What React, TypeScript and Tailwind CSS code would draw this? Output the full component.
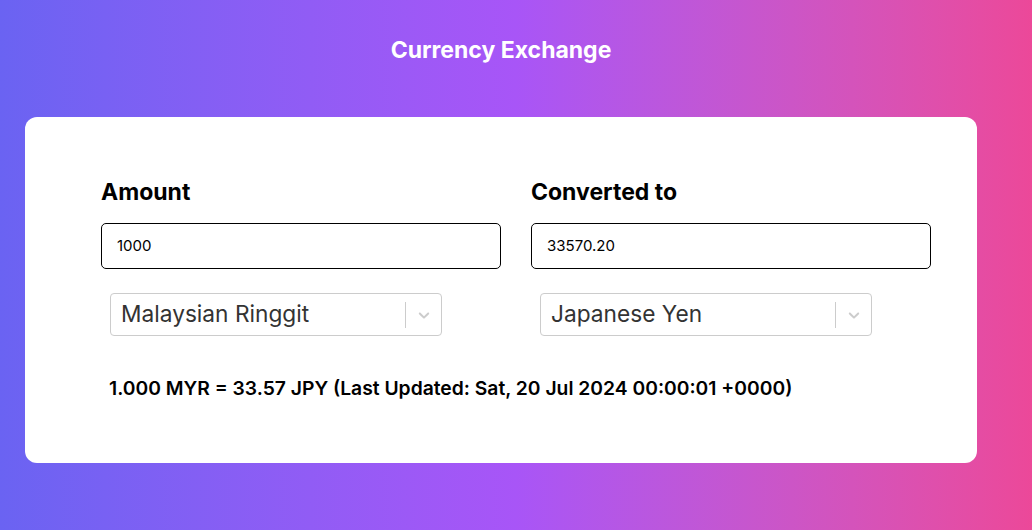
import React from "react";

function Chevron() {
  return (
    <svg width="18" height="18" viewBox="0 0 20 20" className="text-[#cccccc]" fill="currentColor">
      <path d="M4.516 7.548c0.436-0.446 1.043-0.481 1.576 0l3.908 3.747 3.908-3.747c0.533-0.481 1.141-0.446 1.574 0 0.436 0.445 0.408 1.197 0 1.615-0.406 0.418-4.695 4.502-4.695 4.502-0.217 0.223-0.502 0.335-0.787 0.335s-0.57-0.112-0.789-0.335c0 0-4.287-4.084-4.695-4.502s-0.436-1.17 0-1.615z" />
    </svg>
  );
}

function Select({ label }: { label: string }) {
  return (
    <div className="ml-[9px] mt-[24px] flex h-[43px] w-[332px] items-center rounded-[4px] border border-[#cccccc] bg-white">
      <div className="flex-1 pl-[10px] text-[22.7px] text-[#333333]">{label}</div>
      <div className="h-[26px] w-px bg-[#cccccc]" />
      <div className="flex w-[35px] items-center justify-center">
        <Chevron />
      </div>
    </div>
  );
}

function Column({ label, value, currency }: { label: string; value: string; currency: string }) {
  return (
    <div className="flex w-[400px] flex-col">
      <div className="text-[23px] font-bold leading-[28px] text-black">{label}</div>
      <div className="mt-[17px] flex h-[46px] items-center rounded-[5px] border border-black px-[15px] text-[15px] text-black">
        {value}
      </div>
      <Select label={currency} />
    </div>
  );
}

export default function App() {
  return (
    <div
      className="min-h-[530px] w-full bg-gradient-to-r from-[#6a63f2] via-[#a855f7] to-[#ec4899] pr-[30px] pt-[34px]"
      style={{ fontFamily: "Inter, 'Noto Sans', sans-serif" }}
    >
      <h1 className="text-center text-[23px] font-bold leading-[32px] text-white">Currency Exchange</h1>
      <div className="ml-[25px] mt-[51px] h-[346px] w-[952px] rounded-[12px] bg-white pl-[76px] pt-[61px]">
        <div className="flex gap-[30px]">
          <Column label="Amount" value="1000" currency="Malaysian Ringgit" />
          <Column label="Converted to" value="33570.20" currency="Japanese Yen" />
        </div>
        <div className="ml-[8px] mt-[40px] text-[19.3px] font-semibold leading-[24px] text-black">
          1.000 MYR = 33.57 JPY (Last Updated: Sat, 20 Jul 2024 00:00:01 +0000)
        </div>
      </div>
    </div>
  );
}
